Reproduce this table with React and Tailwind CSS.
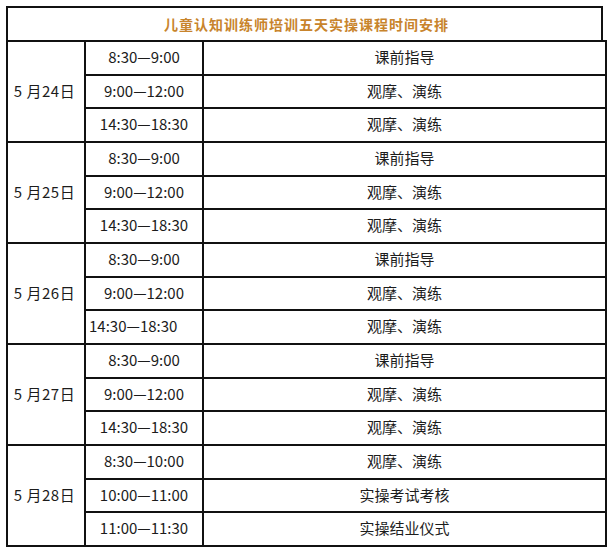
import React from "react";

const schedule = [
  {
    date: "5 月24日",
    rows: [
      ["8:30—9:00", "课前指导"],
      ["9:00—12:00", "观摩、演练"],
      ["14:30—18:30", "观摩、演练"],
    ],
  },
  {
    date: "5 月25日",
    rows: [
      ["8:30—9:00", "课前指导"],
      ["9:00—12:00", "观摩、演练"],
      ["14:30—18:30", "观摩、演练"],
    ],
  },
  {
    date: "5 月26日",
    rows: [
      ["8:30—9:00", "课前指导"],
      ["9:00—12:00", "观摩、演练"],
      ["14:30—18:30", "观摩、演练", true],
    ],
  },
  {
    date: "5 月27日",
    rows: [
      ["8:30—9:00", "课前指导"],
      ["9:00—12:00", "观摩、演练"],
      ["14:30—18:30", "观摩、演练"],
    ],
  },
  {
    date: "5 月28日",
    rows: [
      ["8:30—10:00", "观摩、演练"],
      ["10:00—11:00", "实操考试考核"],
      ["11:00—11:30", "实操结业仪式"],
    ],
  },
];

const rowHeights = ["h-[34px]", "h-[33px]", "h-[34px]"];

const App = () => {
  return (
    <section className="min-h-[555px] w-[612px] bg-white pl-[6px] pt-[6px] font-['Noto_Sans_CJK_SC',sans-serif] text-[#1c1c1c]">
      {/* title */}
      <div className="flex h-[34px] w-[597px] items-center justify-center border-l-2 border-r-2 border-t-2 border-[#111]">
        <h1 className="pl-[4px] text-[14px] font-bold tracking-[1px] text-[#c8842c]">
          儿童认知训练师培训五天实操课程时间安排
        </h1>
      </div>
      {/* body */}
      <div className="flex w-[601px] flex-col border-l-2 border-t-2 border-[#111]">
        {schedule.map((day) => (
          <div key={day.date} className="flex">
            <div className="flex w-[78px] items-center justify-center border-b-2 border-r-2 border-[#111] pr-[3px] text-[15px] tracking-[0.5px]">
              {day.date}
            </div>
            <div className="flex flex-1 flex-col">
              {day.rows.map(([time, task, left], i) => (
                <div key={i} className={`flex ${rowHeights[i]}`}>
                  <div
                    className={`flex w-[118px] items-center border-b-2 border-r-2 border-[#111] pb-[1px] text-[15px] ${
                      left ? "justify-start pl-[3px]" : "justify-center"
                    }`}
                  >
                    {time}
                  </div>
                  <div className="flex flex-1 items-center justify-center border-b-2 border-r-2 border-[#111] pb-[1px] text-[15px]">
                    {task}
                  </div>
                </div>
              ))}
            </div>
          </div>
        ))}
      </div>
    </section>
  );
};

export default App;
